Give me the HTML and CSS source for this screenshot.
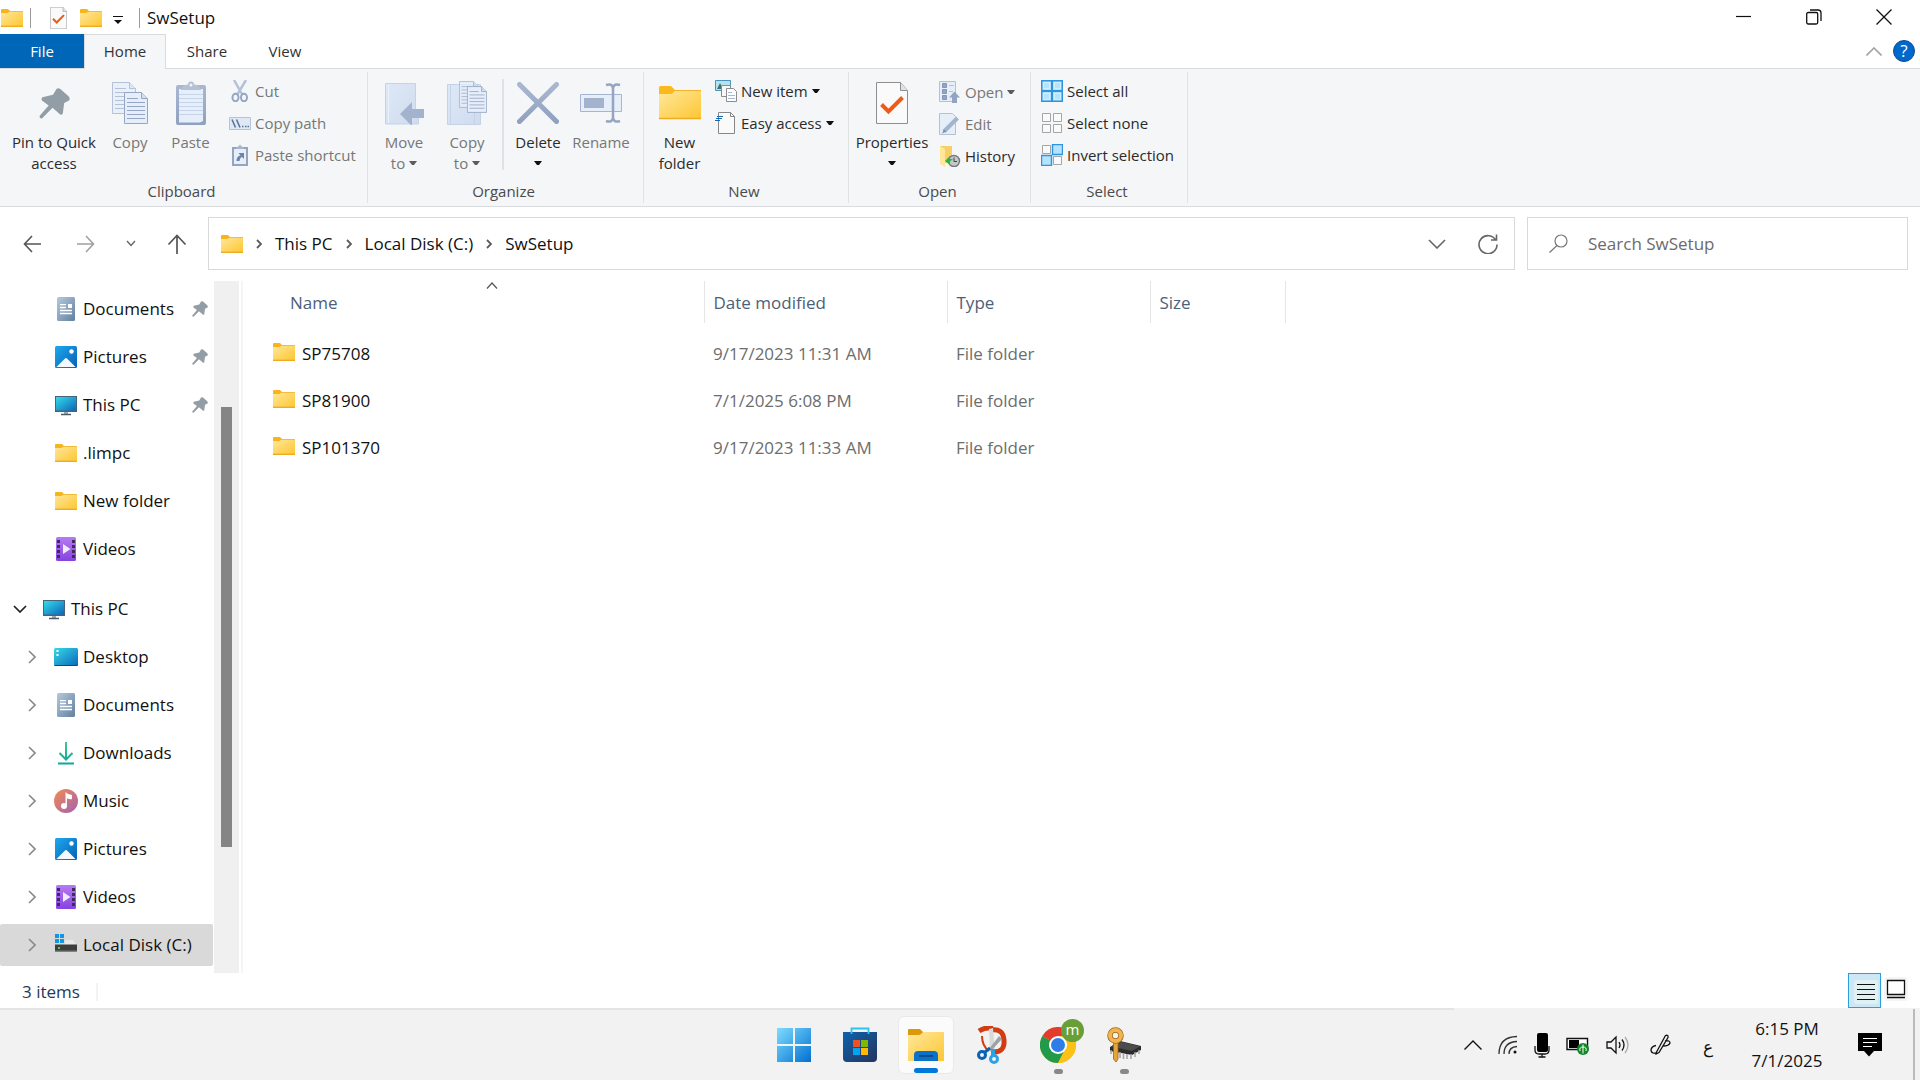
FILE: index.html
```html
<!DOCTYPE html>
<html lang="en">
<head>
<meta charset="utf-8">
<title>SwSetup</title>
<link rel="stylesheet" href="styles.css">
</head>
<body>
<svg class="defs" width="0" height="0" aria-hidden="true">
  <defs>
    <linearGradient id="gFolder" x1="0" y1="0" x2="1" y2="1"><stop offset="0" stop-color="#ffe79c"/><stop offset="1" stop-color="#fdc732"/></linearGradient>
    <linearGradient id="gBlue" x1="0" y1="0" x2="1" y2="1"><stop offset="0" stop-color="#1fa8ee"/><stop offset="1" stop-color="#0560b6"/></linearGradient>
    <linearGradient id="gCyan" x1="0" y1="0" x2="1" y2="1"><stop offset="0" stop-color="#35dbe6"/><stop offset="1" stop-color="#0b66bd"/></linearGradient>
    <linearGradient id="gDoc" x1="0" y1="0" x2="1" y2="1"><stop offset="0" stop-color="#b3c9de"/><stop offset="1" stop-color="#64809f"/></linearGradient>
    <linearGradient id="gVideo" x1="0" y1="0" x2="0" y2="1"><stop offset="0" stop-color="#b57bf3"/><stop offset="1" stop-color="#8742e0"/></linearGradient>
    <linearGradient id="gDown" x1="0" y1="0" x2="0" y2="1"><stop offset="0" stop-color="#3fc78b"/><stop offset="1" stop-color="#0fa5a0"/></linearGradient>
    <linearGradient id="gMusic" x1="0" y1="0" x2="1" y2="1"><stop offset="0" stop-color="#f58b50"/><stop offset="1" stop-color="#a161b4"/></linearGradient>
    <linearGradient id="gWin" x1="0" y1="0" x2="1" y2="1"><stop offset="0" stop-color="#7fdcff"/><stop offset="1" stop-color="#0070d1"/></linearGradient>
    <linearGradient id="gSteel" x1="0" y1="0" x2="0" y2="1"><stop offset="0" stop-color="#a9b8d1"/><stop offset="1" stop-color="#8fa1bf"/></linearGradient>
    <linearGradient id="gPale" x1="0" y1="0" x2="1" y2="1"><stop offset="0" stop-color="#dde8f7"/><stop offset="1" stop-color="#d0dcee"/></linearGradient>
    <linearGradient id="gStore" x1="0" y1="0" x2="1" y2="1"><stop offset="0" stop-color="#0b63ae"/><stop offset="1" stop-color="#27335c"/></linearGradient>

    <symbol id="folder" viewBox="0 0 22 18"><path d="M0 1q0-1 1-1h6l1.500 1.500V5H0z" fill="#f9b31c"/><path d="M0 4h6.500L9 2h13v15H0z" fill="url(#gFolder)"/><path d="M8 2.500h14" stroke="#f3bc3c"/><path d="M0 17.300h22" stroke="#efac23" stroke-width="1.400"/></symbol>
    <symbol id="folderBig" viewBox="0 0 42 34"><path d="M0 1.500Q0 0 1.500 0H12l4 4v6H0z" fill="#fbb91c"/><path d="M0 8h12q2 0 4-3.500h26V32q0 1-1 1H1q-1 0-1-1z" fill="url(#gFolder)"/><path d="M15.500 4.500H42" stroke="#f1b22c"/><path d="M0 32.500h42" stroke="#efab22" stroke-width="1.500"/></symbol>
    <symbol id="check" viewBox="0 0 32 42"><path d="M.500.500h24l7 8v33H.500z" fill="#fafafa" stroke="#8f8f8f"/><path d="M24.500.500v8h7" fill="#e3e3e3" stroke="#8f8f8f"/><path d="M5.500 22.500l7 7 14-14" fill="none" stroke="#f05a18" stroke-width="4"/></symbol>
    <symbol id="pin" viewBox="0 0 32 32"><path d="M18 1q2-1.500 4 0l8.500 7.500q2 2.500.500 4.500l-5 2.500-1.500 11q-1.500 2-3.500 0l-7-6L3 31.500Q.500 32 .500 29l9.500-11L3 13q-1-2 .500-3.500l11-2.500z" fill="#929da5"/></symbol>
    <symbol id="page" viewBox="0 0 24 32"><path d="M.500.500h17l6 6v25H.500z" fill="#e6eefa" stroke="#94a6c4"/><path d="M17.500.500v6h6" fill="#d3deee" stroke="#94a6c4"/><path d="M3 6.500h11M3 10.500h18M3 14.500h18M3 18.500h18M3 22.500h18M3 26.500h18" stroke="#94a6c4"/></symbol>
    <symbol id="caret" viewBox="0 0 8 5"><path d="M0 0h8L5 4H3z" fill="currentColor"/></symbol>
    <symbol id="chev" viewBox="0 0 8 14"><path d="M1 1l6 6-6 6" fill="none" stroke="#8a8a8a" stroke-width="1.600"/></symbol>
    <symbol id="crumb" viewBox="0 0 6 10"><path d="M1 1l4 4-4 4" fill="none" stroke="#5c5c5c" stroke-width="1.800"/></symbol>
    <symbol id="doc" viewBox="0 0 24 24"><rect x="3" width="18" height="24" rx="1.500" fill="url(#gDoc)"/><path d="M6 7.700h6M6 10.500h6M6 13.500h12M6 16.500h12" stroke="#fff" stroke-width="1.300"/><path d="M14 7h4v4h-4z" fill="#fff"/></symbol>
    <symbol id="pic" viewBox="0 0 24 24"><rect x="1" y="1" width="22" height="22" rx="1.500" fill="url(#gBlue)"/><circle cx="17.500" cy="6.500" r="2.200" fill="#fff"/><path d="M2.500 22l8.500-8.500q1-.800 2 0L21.500 22z" fill="#f3f9ff"/></symbol>
    <symbol id="pc" viewBox="0 0 24 24"><path d="M1 3h22v16H1z" fill="#47637c"/><path d="M2 4h20v13.500H2z" fill="url(#gCyan)"/><path d="M10 19h4v2h-4z" fill="#a3aab0"/><path d="M7 21.500h10" stroke="#495a69" stroke-width="1.500"/></symbol>
    <symbol id="video" viewBox="0 0 24 24"><rect x="2" width="20" height="24" rx="1.500" fill="url(#gVideo)"/><path d="M4.500 3v20M19.500 3v20" stroke="#3c2c58" stroke-width="3" stroke-dasharray="3 2"/><path d="M9 7l7.500 5L9 17z" fill="#f0eaff"/></symbol>
    <symbol id="desk" viewBox="0 0 24 24"><rect y="3" width="24" height="18" rx="1.500" fill="url(#gCyan)"/><path d="M.500 20.500h23" stroke="#0a4980"/><path d="M2.500 5h2v2h-2zM2.500 9h2v2h-2z" fill="#fff"/></symbol>
    <symbol id="down" viewBox="0 0 24 24"><path d="M12 1v17M5.500 12l6.500 6.500 6.500-6.500M4 22.500h16" fill="none" stroke="url(#gDown)" stroke-width="2"/></symbol>
    <symbol id="music" viewBox="0 0 24 24"><circle cx="12" cy="12" r="12" fill="url(#gMusic)"/><circle cx="10" cy="17" r="3" fill="#fff"/><path d="M12.200 17V4.500q2 1.500 5 2v3q-3 0-4-1" fill="#fff" stroke="#fff" stroke-width="1.400"/></symbol>
    <symbol id="disk" viewBox="0 0 24 24"><path d="M1 13l5-6h13l4 6z" fill="#e6e8ec"/><path d="M1 2h10v11H1z" fill="#d9d9d9"/><path d="M1 11.500h22v7H1z" fill="#3e3e3e"/><path d="M1 18h22" stroke="#777"/><path d="M4 14h2v2H4z" fill="#3ddb46"/><path d="M1 1h4v4H1zM6 1h4v4H6zM1 6h4v4H1zM6 6h4v4H6z" fill="#1196e6"/></symbol>
  </defs>
</svg>

<header class="titlebar">
  <div class="quick">
    <svg width="22" height="18"><use href="#folder"/></svg>
    <i class="bar"></i>
    <button class="plain q-check" aria-label="Properties"><svg width="17" height="22"><use href="#check"/></svg></button>
    <button class="plain q-folder" aria-label="New folder"><svg width="22" height="18"><use href="#folder"/></svg></button>
    <button class="plain q-more" aria-label="Customize toolbar"><svg width="10" height="8"><path d="M0 .5h10" stroke="#111"/><path d="M1 4h8L5 8z" fill="#111"/></svg></button>
    <i class="bar"></i>
    <h1>SwSetup</h1>
  </div>
  <div class="window-buttons">
    <button class="plain" aria-label="Minimize"><svg width="16" height="16"><path d="M0 7.500h15" stroke="#111" stroke-width="1.200"/></svg></button>
    <button class="plain" aria-label="Restore"><svg width="16" height="16" fill="none" stroke="#111" stroke-width="1.300"><rect x=".7" y="3.500" width="11" height="11.500" rx="1.500"/><path d="M4 1h8q3 0 3 3v8"/></svg></button>
    <button class="plain" aria-label="Close"><svg width="16" height="16"><path d="M.5.5l15 15M15.500.5l-15 15" stroke="#111" stroke-width="1.300"/></svg></button>
  </div>
</header>

<nav class="tabs">
  <button class="tab file">File</button>
  <button class="tab active">Home</button>
  <button class="tab">Share</button>
  <button class="tab">View</button>
  <div class="tabs-end">
    <button class="plain" aria-label="Collapse ribbon"><svg width="16" height="9"><path d="M.5 8.500L8 1l7.500 7.500" fill="none" stroke="#a3a3a3" stroke-width="1.600"/></svg></button>
    <button class="help" aria-label="Help">?</button>
  </div>
</nav>

<section class="ribbon">
  <div class="group">
    <div class="group-body clipboard">
      <button class="big"><span class="ic"><svg width="31" height="31"><use href="#pin"/></svg></span><span>Pin to Quick<br>access</span></button>
      <button class="big off"><span class="ic"><svg width="36" height="42" viewBox="0 0 36 42"><g opacity=".65"><use href="#page" width="24" height="32"/></g><use href="#page" x="12" y="10" width="24" height="32"/></svg></span><span>Copy</span></button>
      <button class="big off"><span class="ic"><svg width="30" height="44" viewBox="0 0 30 44"><rect y="4" width="30" height="40" rx="2" fill="url(#gSteel)"/><path d="M3 8h24v32l-3 1.500H3z" fill="#e6eefa"/><path d="M3 13.500h24M3 17.500h24M3 21.500h24M3 25.500h24M3 29.500h24M3 33.500h24" stroke="#c5d4e8"/><path d="M5 9q1-5 7-5.500 0-3 3-3t3 3Q24 4 25 9z" fill="#b4c1d5"/><circle cx="15" cy="4" r="1.500" fill="#f4f6f8"/></svg></span><span>Paste</span></button>
      <div class="list off">
        <button class="small"><svg width="22" height="22" fill="none" stroke="#95a6c3" stroke-width="2"><path d="M5 0l8.500 15M17 0L8 15" stroke="#b4c2d7" stroke-width="2.500"/><ellipse cx="6.500" cy="17.500" rx="3" ry="3.800"/><ellipse cx="15" cy="17.500" rx="3" ry="3.800"/></svg>Cut</button>
        <button class="small"><svg width="22" height="22"><path d="M.5 5.500h21v12H.5z" fill="#dfe9f6" stroke="#b5c3d9"/><path d="M3 7.500l3.500 8M7.500 7.500l3.500 8M13 14.500h1.500M16 14.500h1.500M18.500 14.500H20" stroke="#5f7394" stroke-width="1.600"/></svg>Copy path</button>
        <button class="small"><svg width="22" height="22"><path d="M3 3h16v19H3z" fill="#93a5c3"/><path d="M5 5h12v15H5z" fill="#e6eefa"/><path d="M7 5q0-2 3-3 1-3 2 0 3 1 3 3z" fill="#a7b6cf"/><path d="M7.500 17q0-5 4-5.500L9.500 9H15v6l-2-2q-2 .5-2.500 4z" fill="#6e83a8"/></svg>Paste shortcut</button>
      </div>
    </div>
    <div class="group-name">Clipboard</div>
  </div>

  <div class="group">
    <div class="group-body organize">
      <button class="big off"><span class="ic"><svg width="40" height="44" viewBox="0 0 40 44"><path d="M1.500 2.500h30v27l3 3v10.500h-33z" fill="url(#gPale)" stroke="#c5d3e7"/><path d="M4.500 3v39" stroke="#eaf1fb"/><path d="M16 33l12-12v7h12v9H28v8z" fill="#a3b2cd"/></svg></span><span>Move<br>to <svg class="caret" width="8" height="5"><use href="#caret"/></svg></span></button>
      <button class="big off"><span class="ic"><svg width="42" height="46" viewBox="0 0 42 46"><path d="M1.500 4.500h33v40h-33z" fill="url(#gPale)" stroke="#c5d3e7"/><path d="M4.500 5v39M28.500 32v12" stroke="#c5d3e7"/><use href="#page" x="13" y="1" width="20" height="27" opacity=".8"/><use href="#page" x="21" y="6" width="20" height="27"/></svg></span><span>Copy<br>to <svg class="caret" width="8" height="5"><use href="#caret"/></svg></span></button>
      <i class="divider"></i>
      <button class="big"><span class="ic"><svg width="42" height="42"><path d="M2.500 2.500l37 37M39.500 2.500l-37 37" stroke="url(#gSteel)" stroke-width="5" stroke-linecap="round"/></svg></span><span>Delete<br><svg class="caret" width="8" height="5"><use href="#caret"/></svg></span></button>
      <button class="big off"><span class="ic"><svg width="42" height="42" fill="none"><path d="M.5 12.500h41v17H.5z" fill="#e6eefa" stroke="#a6b6d0"/><path d="M4 16h20v10H4z" fill="#a3b2cd"/><path d="M26 3q6-2 7 3 1-5 7-3M33 5v32M26 39q6 2 7-3 1 5 7 3" stroke="#94a5c2" stroke-width="2.500"/></svg></span><span>Rename</span></button>
    </div>
    <div class="group-name">Organize</div>
  </div>

  <div class="group">
    <div class="group-body new">
      <button class="big"><span class="ic"><svg width="42" height="34"><use href="#folderBig"/></svg></span><span>New<br>folder</span></button>
      <div class="list">
        <button class="small"><svg width="22" height="22"><path d="M.5.5h15v10H.5z" fill="#b3e1f5" stroke="#4a93b5"/><path d="M2 9l3-6 3 6z" fill="#3f7464"/><path d="M6.500 5.500h9v11h-9z" fill="#f8f8f8" stroke="#8c8c8c"/><path d="M11.500 8.500h7l3 3v10h-10z" fill="#fff" stroke="#8c8c8c"/><path d="M13 12.500h4M13 15.500h7M13 18.500h7" stroke="#9cb9df"/></svg>New item<svg class="caret" width="8" height="5"><use href="#caret"/></svg></button>
        <button class="small"><svg width="22" height="22"><path d="M3.500.5h12l4 4v17h-16z" fill="#fafafa" stroke="#868686"/><path d="M15.500.5v4h4" fill="none" stroke="#868686"/><path d="M2 4.500h6M1 6.500h6M0 8.500h5" stroke="#1467b3" stroke-width="1.200"/></svg>Easy access<svg class="caret" width="8" height="5"><use href="#caret"/></svg></button>
      </div>
    </div>
    <div class="group-name">New</div>
  </div>

  <div class="group">
    <div class="group-body open">
      <button class="big"><span class="ic"><svg width="32" height="42"><use href="#check"/></svg></span><span>Properties<br><svg class="caret" width="8" height="5"><use href="#caret"/></svg></span></button>
      <div class="list">
        <button class="small off"><svg width="22" height="22"><path d="M.5.500h16v20H.5z" fill="#e6eefa" stroke="#b2c1d8"/><path d="M3.500 2.500h4v4h-4zM3.500 8.500h4v4h-4zM3.500 14.500h4v4h-4z" fill="#94a5c2" stroke="#8496b6"/><path d="M10 4.500h5M10 10.500h4" stroke="#b2c1d8"/><path d="M15.500 10.500l5.500 6h-3V22h-5v-5.500h-3z" fill="#93a4c2"/></svg>Open<svg class="caret" width="8" height="5"><use href="#caret"/></svg></button>
        <button class="small off"><svg width="22" height="22"><path d="M.5.500h13l3 3v18H.5z" fill="#e6eefa" stroke="#b2c1d8"/><path d="M5 18.500L18.500 5" stroke="#a3b4ce" stroke-width="4"/><path d="M3 20.500l2-4 2 2z" fill="#7487a8"/></svg>Edit</button>
        <button class="small"><svg width="22" height="22"><path d="M1 1h12v17H1z" fill="#f5cf68"/><path d="M1 1l5 3v18l-5-3z" fill="#ffe79c"/><circle cx="15" cy="16" r="5.500" fill="#c4c8ca" stroke="#777" stroke-width="1.400"/><path d="M15 12.500v4h3" fill="none" stroke="#444"/><path d="M6 16l5-5v3q3 0 3 1-3 0-3 2v3z" fill="#28b244"/></svg>History</button>
      </div>
    </div>
    <div class="group-name">Open</div>
  </div>

  <div class="group">
    <div class="group-body select">
      <div class="list">
        <button class="small"><svg width="22" height="22"><path d="M.75.750h20.500v20.500H.75z" fill="#b5e2fc" stroke="#2f94dd" stroke-width="1.500"/><path d="M11 0v22M0 11h22" stroke="#2f94dd" stroke-width="2"/><path d="M2.500 2.500h6v6h-6zM13.500 2.500h6v6h-6zM2.500 13.500h6v6h-6zM13.500 13.500h6v6h-6z" fill="none" stroke="#d2effe"/></svg>Select all</button>
        <button class="small"><svg width="22" height="22" fill="#fafafa" stroke="#a5a5a5"><path d="M1.500 1.500h8v8h-8zM12.500 1.500h8v8h-8zM1.500 12.500h8v8h-8zM12.500 12.500h8v8h-8z"/></svg>Select none</button>
        <button class="small"><svg width="22" height="22"><path d="M1.500 1.500h8v8h-8zM12.500 12.500h8v8h-8z" fill="#fafafa" stroke="#a5a5a5"/><path d="M11.500.500h10v10h-10zM.5 11.500h10v10H.5z" fill="#b5e2fc" stroke="#2f94dd" stroke-width="1.400"/></svg>Invert selection</button>
      </div>
    </div>
    <div class="group-name">Select</div>
  </div>
</section>

<section class="address-row">
  <div class="history">
    <button class="plain" aria-label="Back"><svg width="18" height="18" fill="none" stroke="#555" stroke-width="1.600"><path d="M18 9H1.500M9 1L1.500 9 9 17"/></svg></button>
    <button class="plain" aria-label="Forward"><svg width="18" height="18" fill="none" stroke="#a0a0a0" stroke-width="1.600"><path d="M0 9h16.500M9 1l7.500 8L9 17"/></svg></button>
    <button class="plain" aria-label="Recent locations"><svg width="10" height="7" fill="none" stroke="#666" stroke-width="1.400"><path d="M1 1l4 4.500L9 1"/></svg></button>
    <button class="plain" aria-label="Up"><svg width="20" height="20" fill="none" stroke="#555" stroke-width="1.700"><path d="M10 20V1.500M1.500 10.500l8.500-9 8.500 9"/></svg></button>
  </div>
  <div class="address">
    <svg width="22" height="18"><use href="#folder"/></svg>
    <svg width="6" height="10"><use href="#crumb"/></svg><a href="#pc">This PC</a>
    <svg width="6" height="10"><use href="#crumb"/></svg><a href="#disk">Local Disk (C:)</a>
    <svg width="6" height="10"><use href="#crumb"/></svg><a href="#folder">SwSetup</a>
    <div class="address-end">
      <button class="plain" aria-label="Previous locations"><svg width="18" height="10" fill="none" stroke="#666" stroke-width="1.600"><path d="M1 1l8 8 8-8"/></svg></button>
      <button class="plain" aria-label="Refresh"><svg width="20" height="20" fill="none" stroke="#666" stroke-width="1.600"><path d="M18 6.500a9 9 0 1 0 1 4M18.500.5V6H13"/></svg></button>
    </div>
  </div>
  <label class="search"><svg width="19" height="19" fill="none" stroke="#777" stroke-width="1.200"><circle cx="12" cy="7" r="6"/><path d="M8 11.500L.5 18.500"/></svg><input type="search" placeholder="Search SwSetup" aria-label="Search SwSetup"></label>
</section>

<main class="content">
  <nav class="tree">
    <a class="row" href="#d"><i class="tw"></i><svg width="24" height="24"><use href="#doc"/></svg><span>Documents</span><svg class="pin" width="16" height="16"><use href="#pin"/></svg></a>
    <a class="row" href="#p"><i class="tw"></i><svg width="24" height="24"><use href="#pic"/></svg><span>Pictures</span><svg class="pin" width="16" height="16"><use href="#pin"/></svg></a>
    <a class="row" href="#t"><i class="tw"></i><svg width="24" height="24"><use href="#pc"/></svg><span>This PC</span><svg class="pin" width="16" height="16"><use href="#pin"/></svg></a>
    <a class="row" href="#l"><i class="tw"></i><svg class="fold" width="24" height="18"><use href="#folder"/></svg><span>.limpc</span></a>
    <a class="row" href="#n"><i class="tw"></i><svg class="fold" width="24" height="18"><use href="#folder"/></svg><span>New folder</span></a>
    <a class="row" href="#v"><i class="tw"></i><svg width="24" height="24"><use href="#video"/></svg><span>Videos</span></a>
    <a class="row root" href="#pc"><i class="tw"><svg width="14" height="8"><path d="M1 1l6 6 6-6" fill="none" stroke="#222" stroke-width="1.700"/></svg></i><svg width="24" height="24"><use href="#pc"/></svg><span>This PC</span></a>
    <a class="row" href="#1"><i class="tw"><svg width="8" height="14"><use href="#chev"/></svg></i><svg width="24" height="24"><use href="#desk"/></svg><span>Desktop</span></a>
    <a class="row" href="#2"><i class="tw"><svg width="8" height="14"><use href="#chev"/></svg></i><svg width="24" height="24"><use href="#doc"/></svg><span>Documents</span></a>
    <a class="row" href="#3"><i class="tw"><svg width="8" height="14"><use href="#chev"/></svg></i><svg width="24" height="24"><use href="#down"/></svg><span>Downloads</span></a>
    <a class="row" href="#4"><i class="tw"><svg width="8" height="14"><use href="#chev"/></svg></i><svg width="24" height="24"><use href="#music"/></svg><span>Music</span></a>
    <a class="row" href="#5"><i class="tw"><svg width="8" height="14"><use href="#chev"/></svg></i><svg width="24" height="24"><use href="#pic"/></svg><span>Pictures</span></a>
    <a class="row" href="#6"><i class="tw"><svg width="8" height="14"><use href="#chev"/></svg></i><svg width="24" height="24"><use href="#video"/></svg><span>Videos</span></a>
    <a class="row selected" href="#7"><i class="tw"><svg width="8" height="14"><use href="#chev"/></svg></i><svg width="24" height="24"><use href="#disk"/></svg><span>Local Disk (C:)</span></a>
  </nav>
  <div class="rail"><div class="thumb"></div></div>
  <div class="files">
    <table>
      <colgroup><col class="c-name"><col class="c-date"><col class="c-type"><col class="c-size"></colgroup>
      <thead><tr>
        <th class="h-name">Name<svg class="sort" width="12" height="7"><path d="M1 6.500l5-5.500 5 5.500" fill="none" stroke="#555" stroke-width="1.200"/></svg></th>
        <th>Date modified</th><th>Type</th><th>Size</th>
      </tr></thead>
      <tbody>
        <tr><td><div class="name"><svg width="22" height="18"><use href="#folder"/></svg>SP75708</div></td><td>9/17/2023 11:31 AM</td><td>File folder</td><td></td></tr>
        <tr><td><div class="name"><svg width="22" height="18"><use href="#folder"/></svg>SP81900</div></td><td>7/1/2025 6:08 PM</td><td>File folder</td><td></td></tr>
        <tr><td><div class="name"><svg width="22" height="18"><use href="#folder"/></svg>SP101370</div></td><td>9/17/2023 11:33 AM</td><td>File folder</td><td></td></tr>
      </tbody>
    </table>
  </div>
</main>

<footer class="status">
  <span class="count">3 items</span>
  <div class="views">
    <button class="view on" aria-label="Details view"><svg width="24" height="24"><rect width="24" height="24" rx="3" fill="#e0f0f3"/><path d="M3 4.500h18M3 9.500h18M3 14.500h18M3 19.500h18" stroke="#111" stroke-width="1.200"/></svg></button>
    <button class="view" aria-label="Thumbnail view"><svg width="24" height="24"><rect width="24" height="24" rx="3" fill="#f5f5f5"/><path d="M3.500 3.500h17v14h-17zM3 20.500h18" fill="#fff" stroke="#111" stroke-width="1.300"/></svg></button>
  </div>
</footer>

<footer class="taskbar">
  <div></div>
  <div class="apps">
    <button class="app" aria-label="Start"><svg width="36" height="36"><path d="M1 1h16v16H1zM19 1h16v16H19zM1 19h16v16H1zM19 19h16v16H19z" fill="url(#gWin)"/></svg></button>
    <button class="app" aria-label="Store"><svg width="36" height="36"><path d="M1 5h34v26q0 4-4 4H5q-4 0-4-4z" fill="url(#gStore)"/><path d="M9.500 7V1.500h17V7" fill="none" stroke="#2cc3f3" stroke-width="1.800"/><path d="M11 13h7v7h-7z" fill="#f25022"/><path d="M19 13h7v7h-7z" fill="#7fba00"/><path d="M11 21h7v7h-7z" fill="#00a4ef"/><path d="M19 21h7v7h-7z" fill="#ffb900"/></svg></button>
    <button class="app current" aria-label="File Explorer"><svg width="36" height="36" viewBox="0 0 36 36"><path d="M0 3q0-1 1-1h11l3 3v7H0z" fill="#dc9a0b"/><path d="M0 8h11q2 0 4-3h20q1 0 1 1v28H0z" fill="url(#gFolder)"/><path d="M6 34V28q0-4 4-4h16q4 0 4 4v6z" fill="#0b72c9"/><path d="M11 29h14" stroke="#0a4d8c" stroke-width="2"/></svg></button>
    <button class="app" aria-label="Snipping tool"><svg width="34" height="38" viewBox="0 0 34 38" fill="none"><path d="M16 4q12-2 13 10 1 12-10 12" stroke="#d13c12" stroke-width="5"/><path d="M4 5q6-4 14-3" stroke="#d13c12" stroke-width="5"/><path d="M7 10q0 10 7 15" stroke="#d13c12" stroke-width="2"/><path d="M14 3l4-1 2 24h-5z" fill="#d7d9db"/><path d="M24 10l3 3-11 12-2-2z" fill="#9da3a8"/><circle cx="7" cy="29" r="3.500" stroke="#0a63b5" stroke-width="3"/><path d="M10 26l5-4" stroke="#0a63b5" stroke-width="3"/><circle cx="19" cy="33" r="3.500" stroke="#2aa2e8" stroke-width="3"/><path d="M18 29v-6" stroke="#2aa2e8" stroke-width="4"/></svg></button>
    <button class="app running" aria-label="Chrome"><svg width="36" height="36" viewBox="0 0 36 36"><circle cx="18" cy="18" r="18" fill="#fbc116"/><path d="M18 18L2.400 9A18 18 0 0 0 18 36l8-13.500z" fill="#229a4c"/><path d="M18 18L2.400 9A18 18 0 0 1 33.600 9H18z" fill="#e33b2e"/><path d="M33.600 9H18l7 13-7 14A18 18 0 0 0 33.600 9z" fill="#fbc116"/><circle cx="18" cy="18" r="9" fill="#fff"/><circle cx="18" cy="18" r="7" fill="#2f7de9"/></svg><span class="badge">m</span></button>
    <button class="app running" aria-label="Key tool"><svg width="36" height="36" viewBox="0 0 36 36"><path d="M4 20l10-6 21 5v4l-9 5-22-4z" fill="#2c2c2c"/><path d="M5 19.500l9-5 20 5-8 4.500z" fill="#4c4c4c"/><path d="M14 25v6M17.500 26v6M21 27v5M25 27v5M29 25v5M33 23v4M5 23v4" stroke="#a3a3a3" stroke-width="1.500"/><path d="M7.500 14h4.500v18l-2 3-2.500-3z" fill="#e8a436" stroke="#9b641e" stroke-width=".8"/><circle cx="9.500" cy="8.500" r="5.500" fill="none" stroke="#9b641e" stroke-width="5.500"/><circle cx="9.500" cy="8.500" r="5.500" fill="none" stroke="#f0b450" stroke-width="4"/></svg></button>
  </div>
  <div class="tray">
    <button class="plain" aria-label="Show hidden icons"><svg width="18" height="10" fill="none" stroke="#111" stroke-width="1.400"><path d="M.5 9.500L9 1l8.500 8.500"/></svg></button>
    <svg width="20" height="20" fill="none" stroke="#333" stroke-width="1.300"><path d="M1 19Q1 2 19 1.500"/><path d="M6 19Q6 7 19 6.500M11 19q0-7 8-7.500"/><circle cx="17" cy="17" r="1.500" fill="#111" stroke="none"/></svg>
    <svg width="16" height="26"><rect x="3" y="1" width="11" height="19" rx="2"/><path d="M1 14v4q0 4 4 4h6q4 0 4-4v-4M8 22v3M4.500 25h7" fill="none" stroke="#111" stroke-width="1.300"/></svg>
    <svg width="24" height="20"><path d="M1 3.500h20.500v11H1z" fill="#fff" stroke="#111" stroke-width="1.400"/><path d="M3 5h10v8H3z"/><circle cx="17" cy="14" r="6" fill="#118a25"/><path d="M17 9.500v9M14 16q-1-4 3-4t3 4" fill="none" stroke="#fff"/></svg>
    <svg width="24" height="20" fill="none" stroke="#111" stroke-width="1.300"><path d="M1 7h4l5-5v16l-5-5H1z"/><path d="M13 7q2 3 0 6M16 4.500q4 5.500 0 11"/><path d="M19 2q6 8 0 16" stroke="#aaa"/></svg>
    <svg class="pen" width="21" height="21" fill="none" stroke="#111" stroke-width="1.300"><path d="M6 19L15.500 1.500q3-1 2.500 2L9 18.500 6 20zM6 11.500q-5 1-5 5 1 4 6 2M13 12q6 0 7-3 0-3-5-2"/></svg>
    <span class="lang">ع</span>
    <div class="clock"><span>6:15 PM</span><span>7/1/2025</span></div>
    <button class="plain note" aria-label="Notifications"><svg width="24" height="24"><path d="M0 0h24v18h-8l-5 5.500L6 18H0z" fill="#000"/><path d="M5 5.500h14M5 9.500h14M5 13.500h9" stroke="#fff" stroke-width="1.200"/></svg></button>
    <i class="peek"></i>
  </div>
</footer>
</body>
</html>
```
FILE: styles.css
```css
* { box-sizing: border-box; }

body {
  margin: 0;
  min-height: 100vh;
  display: flex;
  flex-direction: column;
  background: #fff;
  color: #111;
  font: 17px/24px "Open Sans", "Noto Sans", sans-serif;
}

.defs { position: absolute; }
svg { display: block; flex: none; }
a { color: inherit; text-decoration: none; }

button {
  margin: 0;
  padding: 0;
  border: 0;
  background: none;
  color: inherit;
  font: inherit;
}

.plain { display: flex; align-items: center; justify-content: center; }

/* Title bar */
.titlebar { display: flex; justify-content: space-between; height: 34px; }
.quick { display: flex; align-items: center; padding: 1px 0 0 1px; }
.quick .bar { width: 1px; height: 20px; margin: 0 7px; background: #9b9b9b; }
.q-check { margin-left: 12px; }
.q-folder { margin-left: 13px; }
.q-more { margin: 4px 9px 0 11px; }
.quick h1 { margin: 0; font-size: 17px; font-weight: 400; }
.window-buttons { display: flex; padding-right: 1px; }
.window-buttons .plain { width: 70px; }

/* Tabs */
.tabs { display: flex; height: 35px; border-bottom: 1px solid #dadbdc; font-size: 15px; }
.tab { width: 78px; color: #333; }
.tab.file { width: 84px; background: #0067b8; color: #fff; }
.tab.active {
  width: 82px;
  height: 35px;
  margin-right: 2px;
  padding-bottom: 2px;
  background: #f4f6f8;
  border: 1px solid #dadbdc;
  border-bottom: 0;
}
.tabs-end { display: flex; align-items: center; gap: 11px; margin-left: auto; padding-right: 5px; }
.help {
  width: 22px;
  height: 22px;
  border: 1px solid #0a4d90;
  border-radius: 50%;
  background: #0067cc;
  color: #fff;
  font-size: 17px;
  line-height: 20px;
}

/* Ribbon */
.ribbon {
  display: flex;
  padding: 3px 0;
  background: #f4f6f8;
  border-bottom: 1px solid #dadbdc;
  color: #2b2b2b;
  font-size: 15px;
  line-height: 21px;
}
.group { border-right: 1px solid #e1e2e4; }
.group-body { display: grid; height: 109px; }
.clipboard { grid-template-columns: 108px 44px 77px 138px; }
.organize { grid-template-columns: 72px 54px 14px 60px 75px; }
.new { grid-template-columns: 71px 133px; }
.open { grid-template-columns: 86px 95px; }
.select { grid-template-columns: 156px; }
.group-name { height: 22px; padding-right: 4px; color: #4a4a4a; text-align: center; }
.big { display: flex; flex-direction: column; align-items: center; gap: 7px; padding-top: 9px; white-space: nowrap; }
.ic { display: flex; align-items: center; height: 44px; }
.off { color: #777; }
.caret { display: inline-block; color: #111; vertical-align: 3px; }
.off .caret { color: #5c5c5c; }
.divider { width: 2px; height: 91px; margin: 7px 6px 7px 8px; background: #dfe1e4; }
.list { padding-top: 3px; }
.small { display: flex; align-items: center; gap: 4px; height: 32px; white-space: nowrap; }
.open .list { padding: 4px 0 0 4px; }
.select .list { padding-left: 10px; }
.organize .big:last-child { padding-right: 9px; }

/* Address row */
.address-row { display: flex; padding: 10px 12px 11px 0; }
.history { display: grid; grid-template-columns: 56px 52px 38px 54px; padding: 0 0 0 4px; width: 208px; }
.address, .search { display: flex; align-items: center; height: 53px; border: 1px solid #d9d9d9; }
.address { flex: 1; gap: 13px; padding: 0 16px 0 12px; }
.address-end { display: flex; gap: 32px; margin-left: auto; }
.search { width: 381px; gap: 20px; margin-left: 12px; padding-left: 21px; }
.search input {
  flex: 1;
  min-width: 0;
  padding: 0;
  border: 0;
  outline: 0;
  background: none;
  font: inherit;
  color: #666;
}
.search input::placeholder { color: #6b6b6b; opacity: 1; }

/* Navigation tree */
.content { display: flex; flex: 1; }
.tree { width: 214px; padding: 4px 1px 4px 0; }
.row {
  display: grid;
  grid-template-columns: 54px 24px 1fr 21px;
  align-items: center;
  height: 42px;
  margin: 3px 0 6px;
  white-space: nowrap;
}
.row + .row { margin-top: 0; }
.row span { padding-left: 5px; }
.row.root { grid-template-columns: 42px 24px 1fr; margin-top: 18px; }
.row.selected { grid-template-columns: 54px 24px 1fr; margin-bottom: 0; border-radius: 2px; background: #d9d9d9; }
.fold { padding: 0 1px; }
.tw { display: flex; justify-content: center; width: 64px; }
.root .tw { width: 40px; }
.rail { width: 25px; padding: 126px 7px 126px; background: #f0f0f0; display: flex; }
.thumb { flex: 1; background: #858585; }

/* File list */
.files { flex: 1; margin-left: 2px; padding-left: 29px; border-left: 2px solid #f5f5f5; }
table { border-collapse: collapse; table-layout: fixed; width: 1013px; }
.c-name { width: 432px; }
.c-date { width: 243px; }
.c-type { width: 203px; }
.c-size { width: 135px; }
th { position: relative; height: 42px; padding: 2px 0 0 9px; border-right: 1px solid #e5e5e5; color: #4c607a; font-weight: 400; text-align: left; }
.h-name { padding-left: 18px; }
.sort { position: absolute; top: 1px; left: 9px; right: 0; margin: 0 auto; }
td { height: 47px; padding: 0 0 0 9px; color: #6d6d6d; }
td:first-child { padding: 0 0 0 1px; color: #111; }
tbody tr:first-child td { height: 54px; padding-top: 7px; }
.name { display: flex; align-items: center; gap: 7px; }
.name svg { margin-bottom: 3px; }

/* Status bar */
.status { display: flex; justify-content: space-between; height: 35px; }
.count { height: 18px; margin: 10px 0 0 22px; padding-right: 16px; border-right: 2px solid #f3f3f3; color: #1e395b; line-height: 18px; }
.views { display: flex; padding-right: 6px; }
.view { display: flex; align-items: center; justify-content: center; width: 33px; }
.view.on { padding: 3px 0 0 3px; background: #cce8f6; border: 1px solid #2a9fdb; }
.view:last-child { padding: 0 3px 4px 0; }

/* Taskbar */
.taskbar {
  display: grid;
  grid-template-columns: 1fr auto 1fr;
  height: 72px;
  background: linear-gradient(#e4e4e4, #e4e4e4) 0 0 / calc(100% - 466px) 2px no-repeat, #f2f2f2;
}
.apps { display: flex; gap: 10px; padding: 8px 2px 4px 0; }
.app { position: relative; display: flex; align-items: center; justify-content: center; width: 56px; height: 58px; border-radius: 6px; }
.current { background: #fbfbfb; border: 1px solid #e9e9e9; }
.current::after, .running::after {
  content: "";
  position: absolute;
  bottom: 0;
  left: 50%;
  width: 24px;
  height: 5px;
  margin-left: -12px;
  border-radius: 3px;
  background: #0078d7;
}
.running::after { width: 9px; margin-left: -4px; background: #888; }
.badge {
  position: absolute;
  top: 3px;
  right: 2px;
  width: 23px;
  height: 23px;
  border-radius: 50%;
  background: #689f38;
  color: #fff;
  font-size: 15px;
  line-height: 20px;
}
.tray { display: flex; align-items: center; justify-content: flex-end; gap: 16px; padding-top: 1px; }
.pen { margin-left: 4px; }
.lang { width: 42px; padding-top: 4px; font-family: "DejaVu Sans", sans-serif; font-size: 17px; text-align: center; }
.clock { display: flex; flex-direction: column; width: 84px; line-height: 32px; text-align: center; }
.note { margin: 0 15px 0 13px; }
.peek { align-self: stretch; width: 7px; border-left: 2px solid #bbb; }
```
